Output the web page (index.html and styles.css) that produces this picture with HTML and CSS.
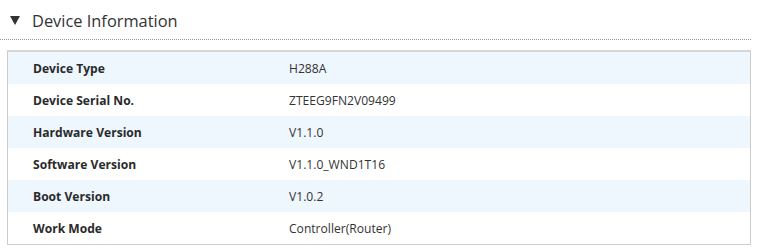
FILE: index.html
```html
<!DOCTYPE html>
<html>
<head>
<meta charset="utf-8">
<link rel="stylesheet" href="styles.css">
</head>
<body>
<div class="page">
  <div class="section-head">
    <span class="caret"></span>
    <span class="title">Device Information</span>
  </div>
  <div class="info-box">
    <div class="row alt"><div class="label">Device Type</div><div class="value">H288A</div></div>
    <div class="row"><div class="label">Device Serial No.</div><div class="value">ZTEEG9FN2V09499</div></div>
    <div class="row alt"><div class="label">Hardware Version</div><div class="value">V1.1.0</div></div>
    <div class="row"><div class="label">Software Version</div><div class="value">V1.1.0_WND1T16</div></div>
    <div class="row alt"><div class="label">Boot Version</div><div class="value">V1.0.2</div></div>
    <div class="row"><div class="label">Work Mode</div><div class="value">Controller(Router)</div></div>
  </div>
</div>
</body>
</html>
```
FILE: styles.css
```css
html, body {
  margin: 0;
  padding: 0;
  background: #fff;
}
body {
  font-family: "Open Sans", "Noto Sans", sans-serif;
  color: #333;
}
.page {
  width: 751px;
}
.section-head {
  height: 40px;
  box-sizing: border-box;
  border-bottom: 1px dotted #999;
  display: flex;
  align-items: center;
  padding-left: 10px;
}
.caret {
  width: 0;
  height: 0;
  border-left: 5px solid transparent;
  border-right: 5px solid transparent;
  border-top: 9px solid #333;
  margin-right: 12px;
  margin-top: 2px;
}
.title {
  font-size: 16.4px;
  color: #333;
  margin-top: 2px;
}
.info-box {
  margin: 10px 0 0 7px;
  border: 1px solid #ccc;
  border-top-width: 2px;
  border-top-color: #d6d6d6;
  display: flex;
  flex-direction: column;
}
.row {
  display: flex;
  align-items: center;
  height: 32px;
  font-size: 12.1px;
}
.row.alt {
  background: #eef6fe;
}
.label {
  width: 256px;
  padding-left: 25px;
  font-weight: bold;
  color: #2a2a2a;
}
.value {
  color: #333;
}
```
